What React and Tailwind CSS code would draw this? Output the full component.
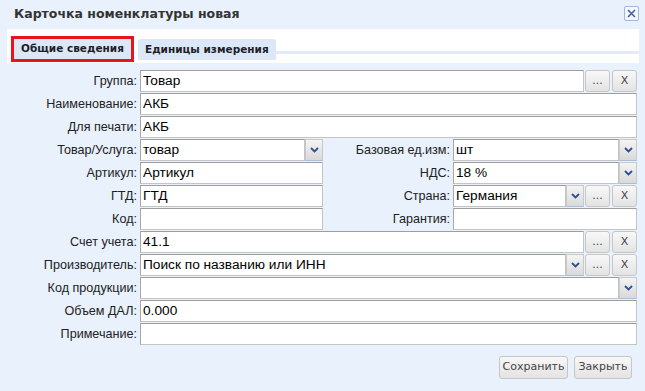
import React from 'react';

const Chevron = () => (
  <svg width="9" height="6" viewBox="0 0 9 6">
    <path d="M1 1 L4.5 4.5 L8 1" fill="none" stroke="#2f4f8f" strokeWidth="1.8" />
  </svg>
);

const Trigger = () => (
  <div className="w-[18px] h-[22px] shrink-0 flex items-center justify-center bg-gradient-to-b from-[#f4f4f4] to-[#d9d9d9] border border-[#c9c9c9] border-b-[#a9bde0]">
    <Chevron />
  </div>
);

const Btn = ({ children, w }) => (
  <div
    className={`h-[22px] ${w} shrink-0 flex items-center justify-center rounded-[3px] border border-[#c6c6c6] bg-gradient-to-b from-[#f8f8f8] to-[#e3e3e3] text-[11px] text-[#444] font-['DejaVu_Sans',sans-serif]`}
  >
    {children}
  </div>
);

const Input = ({ value, combo, className = '' }) => (
  <div className={`flex h-[22px] min-w-0 ${className}`}>
    <div className="flex-1 min-w-0 h-[22px] bg-white border border-[#c4c4c4] border-t-[#9e9e9e] border-l-[#a8a8a8] flex items-center pl-[2px] text-[13.7px] text-black whitespace-nowrap overflow-hidden">
      {value}
    </div>
    {combo && <Trigger />}
  </div>
);

const Label = ({ children, w = 'w-[140px]' }) => (
  <div className={`${w} shrink-0 text-right pr-[3px] text-[12.6px] text-[#222] leading-[22px]`}>{children}</div>
);

const Row = ({ label, children }) => (
  <div className="flex h-[23px] items-start">
    <Label>{label}</Label>
    <div className="flex-1 flex min-w-0">{children}</div>
  </div>
);

const Tools = () => (
  <div className="flex gap-[2px] ml-[1px]">
    <Btn w="w-[25px]">...</Btn>
    <Btn w="w-[25px]">X</Btn>
  </div>
);

const Split = ({ label, left, right }) => (
  <div className="flex h-[23px] items-start">
    <Label>{label}</Label>
    <div className="w-[183px] shrink-0">{left}</div>
    <Label w="w-[130px]">{right.label}</Label>
    <div className="flex-1 flex min-w-0">{right.field}</div>
  </div>
);

export default function App() {
  return (
    <div className="w-[645px] h-[391px] bg-[#e8f1fc] overflow-hidden font-['Liberation_Sans',Arial,sans-serif]">
      {/* заголовок */}
      <div className="h-[29px] flex items-center justify-between pl-[14px] pr-[6px]">
        <div className="text-[12.5px] font-bold text-[#333] font-['DejaVu_Sans',sans-serif]">Карточка номенклатуры новая</div>
        <div className="w-[15px] h-[15px] border border-[#9fb6de] rounded-[2px] bg-[#f4f8fe] flex items-center justify-center mb-[2px]">
          <svg width="9" height="9" viewBox="0 0 9 9">
            <path d="M1 1 L8 8 M8 1 L1 8" stroke="#4563a8" strokeWidth="1.6" />
          </svg>
        </div>
      </div>

      {/* вкладки */}
      <div className="mx-[7px] mr-[6px] h-[34px] bg-white pt-[7px] pl-[4px] flex items-start">
        <div className="border-[3px] border-[#e8141c] h-[26px]">
          <div className="h-[20px] px-[7px] bg-[#dde8f6] flex items-center text-[10.5px] font-bold text-[#1e1e2a] font-['DejaVu_Sans',sans-serif]">
            Общие сведения
          </div>
        </div>
        <div className="ml-[4px] mt-[3px] h-[21px] px-[7px] bg-[#dce8f8] rounded-t-[3px] flex items-center text-[10.5px] font-bold text-[#1e1e2a] font-['DejaVu_Sans',sans-serif]">
          Единицы измерения
        </div>
        <div className="flex-1 mt-[15px] h-[3px] bg-[#e2ebf7]" />
      </div>

      {/* форма */}
      <div className="mt-[7px] pr-[8px]">
        <Row label="Группа:">
          <Input value="Товар" className="flex-1" />
          <Tools />
        </Row>
        <Row label="Наименование:">
          <Input value="АКБ" className="flex-1" />
        </Row>
        <Row label="Для печати:">
          <Input value="АКБ" className="flex-1" />
        </Row>
        <Split
          label="Товар/Услуга:"
          left={<Input value="товар" combo />}
          right={{ label: 'Базовая ед.изм:', field: <Input value="шт" combo className="flex-1" /> }}
        />
        <Split
          label="Артикул:"
          left={<Input value="Артикул" />}
          right={{ label: 'НДС:', field: <Input value="18 %" combo className="flex-1" /> }}
        />
        <Split
          label="ГТД:"
          left={<Input value="ГТД" />}
          right={{
            label: 'Страна:',
            field: (
              <>
                <Input value="Германия" combo className="flex-1" />
                <Tools />
              </>
            ),
          }}
        />
        <Split
          label="Код:"
          left={<Input value="" />}
          right={{ label: 'Гарантия:', field: <Input value="" className="flex-1" /> }}
        />
        <Row label="Счет учета:">
          <Input value="41.1" className="flex-1" />
          <Tools />
        </Row>
        <Row label="Производитель:">
          <Input value="Поиск по названию или ИНН" combo className="flex-1" />
          <Tools />
        </Row>
        <Row label="Код продукции:">
          <Input value="" combo className="flex-1" />
        </Row>
        <Row label="Объем ДАЛ:">
          <Input value="0.000" className="flex-1" />
        </Row>
        <Row label="Примечание:">
          <Input value="" className="flex-1" />
        </Row>
      </div>

      {/* кнопки */}
      <div className="mt-[10px] flex justify-end gap-[6px] pr-[13px]">
        <Btn w="w-[69px] h-[23px]">Сохранить</Btn>
        <Btn w="w-[58px] h-[23px]">Закрыть</Btn>
      </div>
    </div>
  );
}
